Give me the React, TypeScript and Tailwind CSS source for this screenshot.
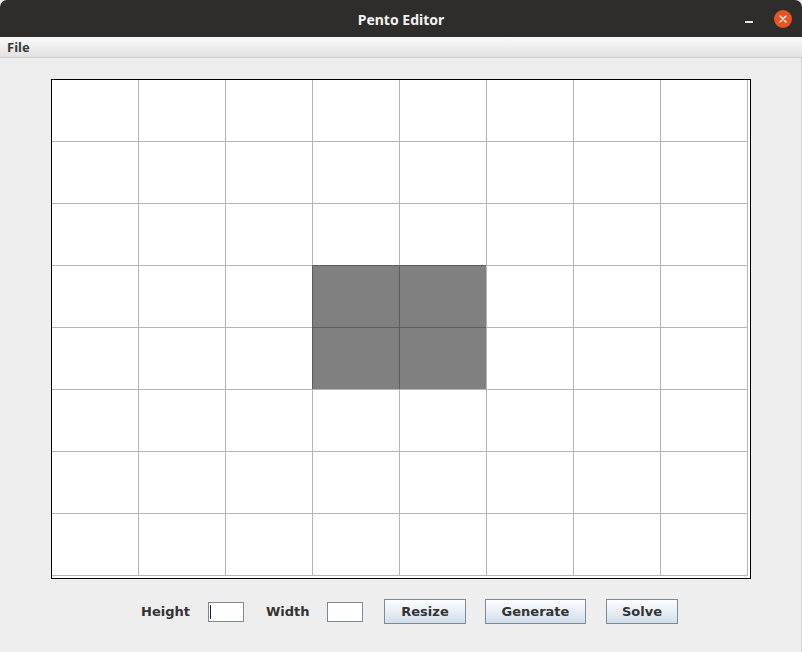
import React from "react";

const ROWS = 8;
const COLS = 8;
const filled = new Set(["3-3", "3-4", "4-3", "4-4"]);

function Cell({ r, c }: { r: number; c: number }) {
  const isFilled = filled.has(`${r}-${c}`);
  const base = isFilled
    ? "bg-[#808080] border-l border-t border-[#5e5e5e]"
    : "bg-white border-l border-t border-[#b4b4b4]";
  const extraR = c === COLS - 1 ? " border-r border-r-[#b4b4b4]" : "";
  const extraB = r === ROWS - 1 ? " border-b border-b-[#b4b4b4]" : "";
  return <div className={base + extraR + extraB} />;
}

function Field() {
  return (
    <div className="relative h-[20px] w-[36px] border border-[#7a8a99] bg-white">
      <div className="absolute left-[1px] top-[2px] h-[14px] w-[1px] bg-[#222]" />
    </div>
  );
}

function Field2() {
  return <div className="h-[20px] w-[36px] border border-[#7a8a99] bg-white" />;
}

function Btn({ label, w }: { label: string; w: string }) {
  return (
    <div
      className={`${w} flex h-[25px] items-center justify-center border border-[#7a8a99] bg-gradient-to-b from-[#fdfeff] to-[#d3deeb] text-[13px] font-bold text-[#333]`}
    >
      {label}
    </div>
  );
}

export default function App() {
  const cells = [];
  for (let r = 0; r < ROWS; r++) {
    for (let c = 0; c < COLS; c++) {
      cells.push(<Cell key={`${r}-${c}`} r={r} c={c} />);
    }
  }
  return (
    <div
      className="flex h-[652px] w-[802px] flex-col overflow-hidden bg-[#eeeeee]"
      style={{ fontFamily: '"DejaVu Sans", sans-serif' }}
    >
      {/* Title bar */}
      <div className="relative flex h-[37px] shrink-0 items-center justify-center rounded-t-[7px] bg-[#2f2d2b] pt-[2px]">
        <span
          className="text-[14px] font-bold text-[#f2f2f2]"
          style={{ fontFamily: '"Noto Sans", sans-serif' }}
        >
          Pento Editor
        </span>
        <div className="absolute left-[745px] top-[21px] h-[1.5px] w-[8px] bg-[#e8e8e8]" />
        <div className="absolute left-[774px] top-[10px] flex h-[18px] w-[18px] items-center justify-center rounded-full bg-[#e95420]">
          <svg width="10" height="10" viewBox="0 0 10 10">
            <path d="M2 2 L8 8 M8 2 L2 8" stroke="#fff" strokeWidth="1.4" strokeLinecap="round" />
          </svg>
        </div>
      </div>

      {/* Menu bar */}
      <div className="flex h-[21px] shrink-0 items-center border-b border-[#cfcfcf] bg-gradient-to-b from-[#fafafa] to-[#e2e2e2] pl-[7px] pt-[1px]">
        <span
          className="text-[13px] font-bold text-[#3a3a3a]"
          style={{ fontFamily: '"Noto Sans", sans-serif' }}
        >
          File
        </span>
      </div>

      {/* Content */}
      <div className="flex flex-1 flex-col items-center border-r border-[#d4d4d4] pt-[21px]">
        <div className="h-[500px] w-[700px] border border-black bg-white">
          <div className="grid grid-cols-[86px_repeat(6,87px)_88px] grid-rows-[61px_repeat(6,62px)_63px] [&>div:nth-child(8n+1)]:border-l-0 [&>div:nth-child(-n+8)]:border-t-0">
            {cells}
          </div>
        </div>

        <div className="mt-[20px] flex items-center pl-[18px] text-[13px] font-bold text-[#333]">
          <span className="w-[67px] text-left">Height</span>
          <Field />
          <span className="ml-[22px] w-[61px] text-left">Width</span>
          <Field2 />
          <div className="ml-[21px]">
            <Btn label="Resize" w="w-[82px]" />
          </div>
          <div className="ml-[19px]">
            <Btn label="Generate" w="w-[101px]" />
          </div>
          <div className="ml-[20px]">
            <Btn label="Solve" w="w-[72px]" />
          </div>
        </div>
      </div>
    </div>
  );
}
